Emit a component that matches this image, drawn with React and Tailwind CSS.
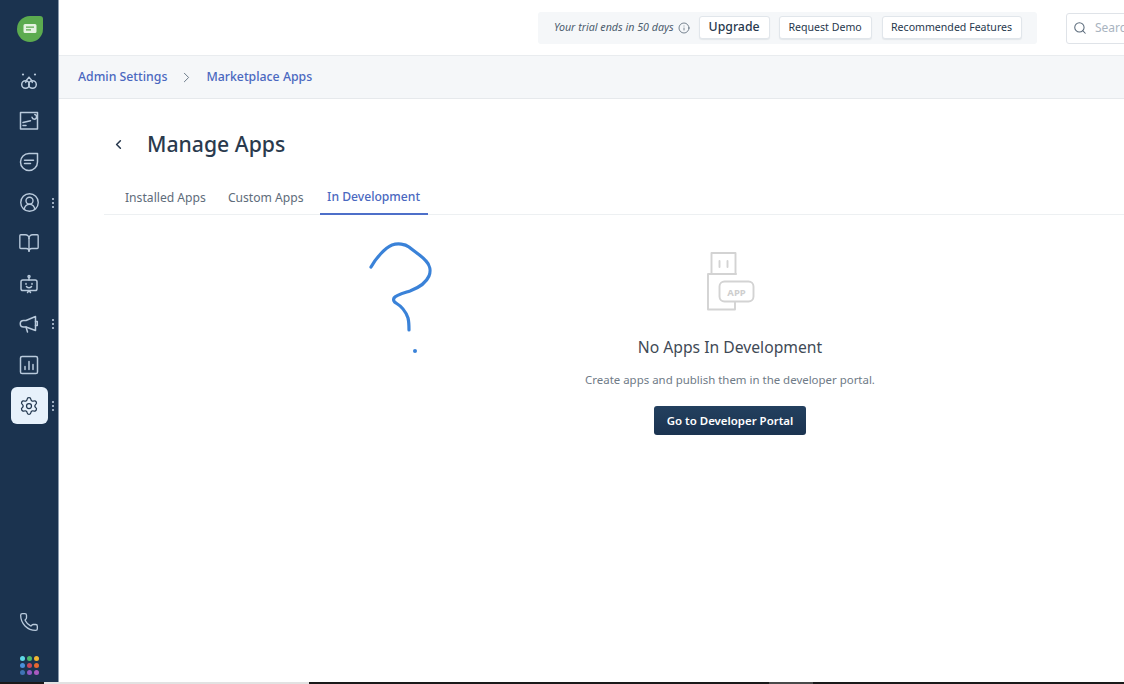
import React from "react";
import { ChevronLeft, ChevronRight, Info, Search, Phone, BookOpen, Settings, CircleUserRound } from "lucide-react";

const iconStroke = "#b9cadc";

const Svg = ({ children }) => (
  <svg width="20" height="20" viewBox="0 0 20 20" fill="none" stroke={iconStroke} strokeWidth="1.500" strokeLinecap="round" strokeLinejoin="round">
    {children}
  </svg>
);

const FreddyIcon = () => (
  <Svg>
    <circle cx="6.500" cy="13.500" r="3.800" />
    <circle cx="13.500" cy="13.500" r="3.800" />
    <path d="M10 6.200c-2 1.900-3.200 3.600-3.300 5.200M10 6.200c2 1.900 3.200 3.600 3.300 5.200" />
    <circle cx="4" cy="3.500" r="1.100" fill={iconStroke} stroke="none" />
    <circle cx="16" cy="3.500" r="1.100" fill={iconStroke} stroke="none" />
  </Svg>
);

const TicketIcon = () => (
  <Svg>
    <path d="M11.500 1.500H18.500V18H1.500V1.500h10" />
    <path d="M4 14.500h3M4 11.500l7.500-1.800" />
    <path d="M13 6.200a2.300 2.300 0 1 0 2.800-2.600" />
  </Svg>
);

const ChatIcon = () => (
  <Svg>
    <path d="M10 1.500h8.500V10a8.500 8.500 0 1 1-8.500-8.500Z" />
    <path d="M5.500 8.200h9M5.500 11.500h6" />
  </Svg>
);

const BotIcon = () => (
  <Svg>
    <rect x="2" y="6" width="16" height="10.500" rx="1.800" />
    <path d="M10 6V3.600M8.500 18.500 10 16.500l1.500 2" />
    <circle cx="10" cy="2.600" r="1" />
    <path d="M7 9.500v.8M13 9.500v.8M7.500 12.600c1.400 1.200 3.600 1.200 5 0" />
  </Svg>
);

const MegaphoneIcon = () => (
  <Svg>
    <path d="M16.500 2.500v14L7 13H4.500a3 3 0 0 1 0-6.500H7l9.500-4Z" />
    <path d="M16.500 7.500h1.800v4h-1.800" />
    <path d="M7 13l1.500 5" />
  </Svg>
);

const ChartIcon = () => (
  <Svg>
    <rect x="1.500" y="1.500" width="17" height="17" rx="1.600" />
    <path d="M6 14.500v-3M10 14.500v-8M14 14.500v-5" />
  </Svg>
);

const VDots = () => (
  <div className="absolute left-[52px] top-1/2 -translate-y-1/2 flex flex-col gap-[2px]">
    <span className="w-[2px] h-[2px] rounded-full bg-[#c7d5e4]" />
    <span className="w-[2px] h-[2px] rounded-full bg-[#c7d5e4]" />
    <span className="w-[2px] h-[2px] rounded-full bg-[#c7d5e4]" />
  </div>
);

const NavItem = ({ children, dots, active }) => (
  <div className="relative h-[40.600px] w-full flex items-center justify-center">
    <div className={"w-[37px] h-[37px] flex items-center justify-center rounded-md " + (active ? "bg-[#e7f1fb]" : "")}>
      {children}
    </div>
    {dots && <VDots />}
  </div>
);

const appDots = ["#5fd9e6", "#4eb96a", "#f2b632", "#4a90d9", "#c9475a", "#e5682f", "#3f73b5", "#9158c4", "#a95bc0"];

const Sidebar = () => (
  <div className="w-[59px] shrink-0 bg-[#1b334f] border-r border-[#8b9bad] flex flex-col items-center">
    <div className="pt-[16px] pb-[18.500px] ml-[2px]">
      <div className="w-[26px] h-[26px] bg-[#5cab4f] rounded-t-[13px] rounded-bl-[13px] rounded-br-[13px] rounded-tr-[3px] flex items-center justify-center">
        <svg width="14" height="12" viewBox="0 0 14 12">
          <path d="M2 1h10a1.500 1.500 0 0 1 1.500 1.500v6A1.500 1.500 0 0 1 12 10H2A1.500 1.500 0 0 1 .5 8.500v-6A1.500 1.500 0 0 1 2 1Z" fill="#e6f3e2" />
          <path d="M3 4.200h8M3 6.800h5" stroke="#5cab4f" strokeWidth="1.200" />
        </svg>
      </div>
    </div>
    <NavItem><FreddyIcon /></NavItem>
    <NavItem><TicketIcon /></NavItem>
    <NavItem><ChatIcon /></NavItem>
    <NavItem dots><CircleUserRound size={21} color={iconStroke} strokeWidth={1.600} /></NavItem>
    <NavItem><BookOpen size={22} color={iconStroke} strokeWidth={1.500} /></NavItem>
    <NavItem><BotIcon /></NavItem>
    <NavItem dots><MegaphoneIcon /></NavItem>
    <NavItem><ChartIcon /></NavItem>
    <NavItem dots active><Settings size={20} color="#22374f" strokeWidth={1.500} /></NavItem>
    <div className="mt-auto pb-[7px] flex flex-col items-center gap-[24px]">
      <Phone size={20} color={iconStroke} strokeWidth={1.600} />
      <div className="grid grid-cols-3 gap-[2px]">
        {appDots.map((c) => (
          <span key={c} className="w-[5px] h-[5px] rounded-full" style={{ backgroundColor: c }} />
        ))}
      </div>
    </div>
  </div>
);

const OutlineBtn = ({ children, className }) => (
  <button className={"h-[23px] rounded-[3px] border border-[#e1e6eb] bg-white flex items-center justify-center text-[#27384d] shadow-[0_1px_1px_rgba(30,50,70,0.08)] " + className}>
    {children}
  </button>
);

const TopBar = () => (
  <div className="h-[56px] shrink-0 border-b border-[#e9ecef] bg-white flex items-center pl-[479px] overflow-hidden">
    <div className="w-[499px] shrink-0 h-[32px] bg-[#f5f7f9] rounded-[3px] flex items-center pl-[16px]">
      <span className="italic text-[10.700px] text-[#4d5d6e]">Your trial ends in 50 days</span>
      <Info size={12} color="#4d5d6e" strokeWidth={1.500} className="ml-[4px]" />
      <OutlineBtn className="ml-[9px] w-[71px] text-[12.300px] font-medium">Upgrade</OutlineBtn>
      <OutlineBtn className="ml-[9px] w-[93px] text-[10.600px]">Request Demo</OutlineBtn>
      <OutlineBtn className="ml-[10px] w-[140px] text-[10.600px]">Recommended Features</OutlineBtn>
    </div>
    <div className="ml-[29px] mt-[1px] w-[120px] shrink-0 h-[31px] border border-[#dfe3e8] rounded-[3px] flex items-center pl-[6px] gap-[8px] bg-white">
      <Search size={14} color="#5b6b7b" strokeWidth={1.800} />
      <span className="text-[12px] text-[#a9b4bf]">Search</span>
    </div>
  </div>
);

const Breadcrumb = () => (
  <div className="h-[43px] shrink-0 bg-[#f5f7f9] border-b border-[#e6e9ec] flex items-center pl-[19px] text-[12.300px] font-medium text-[#4a68c0]">
    <span>Admin Settings</span>
    <ChevronRight size={17} color="#5f6f80" strokeWidth={1.300} className="mx-[11px]" />
    <span>Marketplace Apps</span>
  </div>
);

const Tabs = () => (
  <div className="border-b border-[#edf0f2] flex h-[36px] pl-[14px] text-[12.150px] text-[#5e6c7a]">
    <div className="px-[7px] flex items-center pt-[3px]">Installed Apps</div>
    <div className="ml-[8px] px-[7px] flex items-center pt-[3px]">Custom Apps</div>
    <div className="ml-[9px] w-[108px] flex items-center justify-center font-medium text-[#4a68c0] border-b-2 border-[#4d6fc9] h-[36px] pt-[3px]">In Development</div>
  </div>
);

const UsbIcon = () => (
  <svg className="ml-[2px]" width="48" height="59" viewBox="0 0 48 59" fill="none" stroke="#d3d3d3" strokeWidth="1.900" strokeLinejoin="round" strokeLinecap="round">
    <path d="M4.500 22V1h24v21" />
    <path d="M12.500 9v6M20.500 9v6" />
    <path d="M29 22H1v35.500h27V50" />
    <rect x="12.500" y="29.500" width="34" height="20" rx="5" />
    <text x="29.500" y="43.500" textAnchor="middle" fontSize="9.500" fontWeight="700" fill="#cecece" stroke="none" fontFamily="'Noto Sans', sans-serif">APP</text>
  </svg>
);

const QuestionMark = () => (
  <svg className="absolute left-[264px] top-[27px]" width="70" height="112" viewBox="0 0 70 112" fill="none" stroke="#3a82d8" strokeLinecap="round" strokeLinejoin="round">
    <path
      d="M3 25C8 16 17 6 24 3C30 1 37 2 41 5C47 10 54 14 58 19C62 23 63 29 61 34C58 41 50 46 42 49C36 51 28 53 26 56C25 58 26 60 28 61C33 64 38 70 40 76C41 80 41 84 41 88"
      strokeWidth="3.200"
    />
    <circle cx="47" cy="109" r="2" fill="#3a82d8" stroke="none" />
  </svg>
);

const EmptyState = () => (
  <div className="relative pl-[232px] flex flex-col items-center pt-[37px]">
    <QuestionMark />
    <UsbIcon />
    <div className="mt-[24px] text-[15.700px] leading-[24px] text-[#3f4a56]">No Apps In Development</div>
    <div className="mt-[12px] text-[11.450px] leading-[18px] text-[#6f7b87]">Create apps and publish them in the developer portal.</div>
    <button className="mt-[17px] w-[152px] h-[29px] rounded-[3px] bg-gradient-to-b from-[#23405f] to-[#1b3350] text-white text-[11.450px] font-semibold">
      Go to Developer Portal
    </button>
  </div>
);

export default function App() {
  return (
    <div className="w-[1124px] h-[684px] overflow-hidden flex flex-col bg-white font-['Noto_Sans',sans-serif]">
      <div className="flex-1 flex min-h-0">
        <Sidebar />
        <div className="flex-1 min-w-0 flex flex-col">
          <TopBar />
          <Breadcrumb />
          <div className="pl-[45px] flex-1">
            <div className="flex items-center h-[36px] mt-[27px] pl-[7px]">
              <ChevronLeft size={15} color="#27384d" strokeWidth={2.500} />
              <h1 className="ml-[21px] text-[21.200px] font-medium text-[#2a3a4d]">Manage Apps</h1>
            </div>
            <div className="mt-[17px]">
              <Tabs />
            </div>
            <EmptyState />
          </div>
        </div>
      </div>
      <div className="h-[2px] shrink-0 flex bg-[#1a1a1a]">
        <div className="w-[44px]" />
        <div className="w-[265px] bg-[#e2e2e2]" />
        <div className="w-[460px]" />
        <div className="w-[44px] bg-[#4a4a4a]" />
      </div>
    </div>
  );
}
